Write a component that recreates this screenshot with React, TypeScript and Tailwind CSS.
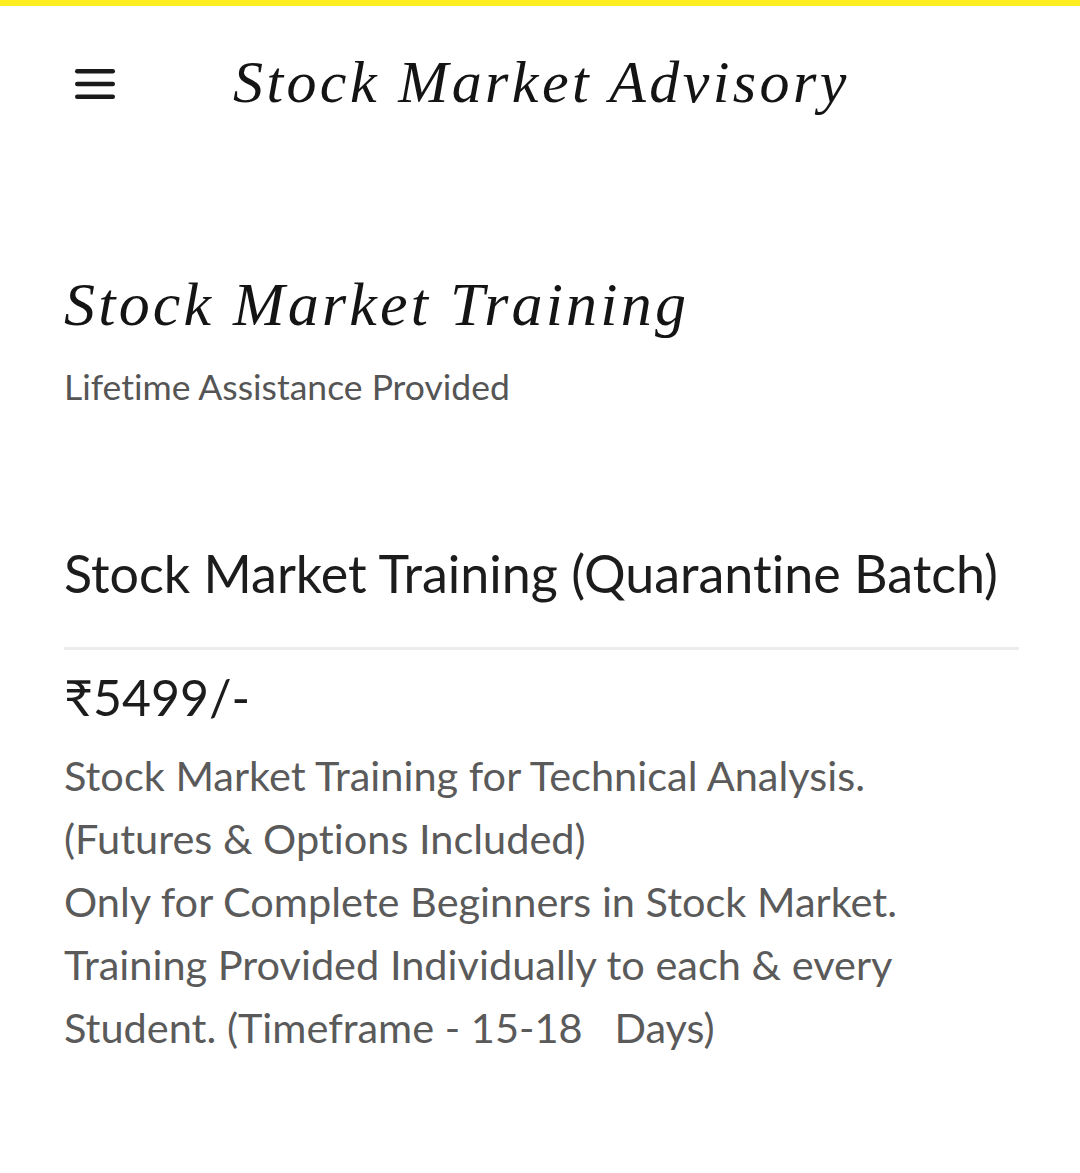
import React from "react";

const serif = "font-['Liberation_Serif',serif] italic";
const sans = "font-['Lato','Open_Sans',sans-serif] [font-variant-ligatures:none]";

function MenuIcon() {
  return (
    <svg width="44" height="34" viewBox="0 0 44 34" className="text-[#1a1a1a]">
      <rect x="2" y="2" width="40" height="4.5" rx="2.25" fill="currentColor" />
      <rect x="2" y="14.75" width="40" height="4.5" rx="2.25" fill="currentColor" />
      <rect x="2" y="27.5" width="40" height="4.5" rx="2.25" fill="currentColor" />
    </svg>
  );
}

export default function App() {
  return (
    <div className="min-h-[1173px] w-[1080px] bg-white">
      <div className="h-[6px] bg-[#fcee21]" />

      {/* ── Header ─────────────────────────────────────────────── */}
      <header className="flex h-[155px] items-center pl-[73px]">
        <MenuIcon />
        <h1 className={`${serif} ml-[116px] pb-[4px] text-[60px] leading-none tracking-[3.4px] text-[#141414]`}>
          Stock Market Advisory
        </h1>
      </header>

      <main className="px-[64px]">
        {/* ── Intro ─────────────────────────────────────────────── */}
        <section className="pt-[112px]">
          <h2 className={`${serif} text-[62px] leading-none tracking-[3.2px] text-[#141414]`}>
            Stock Market Training
          </h2>
          <p className={`${sans} mt-[25px] text-[35.5px] text-[#555]`}>
            Lifetime Assistance Provided
          </p>
        </section>

        {/* ── Product ───────────────────────────────────────────── */}
        <section className="mt-[134px] mr-[-3px]">
          <h3 className={`${sans} text-[52px] leading-none text-[#1c1c1c]`}>
            Stock Market Training (Quarantine Batch)
          </h3>
          <div className="mt-[48px] h-[3px] bg-[#ececec]" />
          <p className={`${sans} mt-[22px] text-[50px] leading-none text-[#1c1c1c]`}>
            ₹5499/-
          </p>
          <div className={`${sans} mt-[22px] text-[41.5px] leading-[63px] text-[#5a5a5a]`}>
            <p>Stock Market Training for Technical Analysis.</p>
            <p>(Futures &amp; Options Included)</p>
            <p>Only for Complete Beginners in Stock Market.</p>
            <p>Training Provided Individually to each &amp; every</p>
            <p>Student. (Timeframe - 15-18&nbsp;&nbsp; Days)</p>
          </div>
        </section>
      </main>
    </div>
  );
}
